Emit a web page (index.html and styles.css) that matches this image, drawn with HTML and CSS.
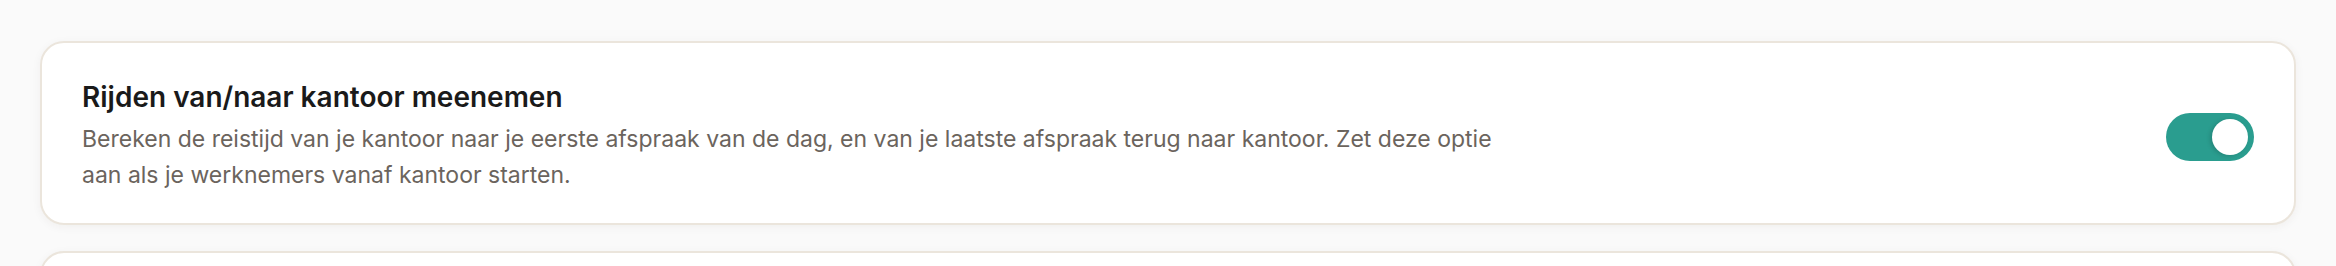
FILE: index.html
```html
<!DOCTYPE html>
<html>
<head>
    <meta charset="UTF-8">
    <title>Instellingen</title>
    <link rel="stylesheet" href="styles.css">
</head>
<body>
    <div class="settings-list">
        <!-- Rijden van/naar kantoor -->
        <div class="setting-card">
            <div class="setting-text">
                <h3 class="setting-title">Rijden van/naar kantoor meenemen</h3>
                <p class="setting-desc">Bereken de reistijd van je kantoor naar je eerste afspraak van de dag, en van je laatste afspraak terug naar kantoor. Zet deze optie aan als je werknemers vanaf kantoor starten.</p>
            </div>
            <button class="toggle is-on" type="button" aria-pressed="true">
                <span class="toggle-knob"></span>
            </button>
        </div>

        <div class="setting-card">
            <div class="setting-text">
                <h3 class="setting-title">&nbsp;</h3>
            </div>
        </div>
    </div>
</body>
</html>
```

FILE: styles.css
```css
* {
    margin: 0;
    padding: 0;
    box-sizing: border-box;
}

html, body {
    height: 100%;
}

body {
    font-family: Inter, "Noto Sans", sans-serif;
    background: #fafafa;
    color: #1c1b1a;
    overflow: hidden;
}

.settings-list {
    display: flex;
    flex-direction: column;
    gap: 26px;
    padding: 41px 40px;
}

.setting-card {
    display: flex;
    align-items: center;
    justify-content: space-between;
    gap: 40px;
    background: #fff;
    border: 2px solid #ebe5dc;
    border-radius: 24px;
    padding: 38px 40px 30px;
    box-shadow: 0 2px 10px rgba(60, 40, 20, 0.05);
    min-height: 184px;
}

.setting-text {
    max-width: 1440px;
}

.setting-title {
    font-size: 28px;
    font-weight: 600;
    line-height: 32px;
    color: #1a1a1a;
    margin-bottom: 8px;
}

.setting-desc {
    font-size: 23px;
    line-height: 36px;
    color: #6b645d;
}

.toggle {
    flex-shrink: 0;
    width: 88px;
    height: 48px;
    border: none;
    border-radius: 24px;
    background: #2a9d8f;
    padding: 6px;
    display: flex;
    justify-content: flex-end;
    cursor: pointer;
}

.toggle-knob {
    width: 36px;
    height: 36px;
    border-radius: 50%;
    background: #fff;
    box-shadow: -2px 1px 4px rgba(0, 0, 0, 0.15);
}
```
